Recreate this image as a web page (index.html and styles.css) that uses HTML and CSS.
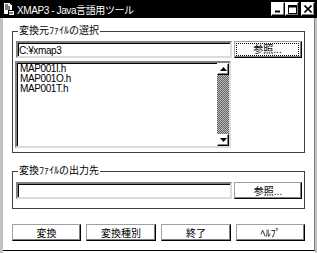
FILE: index.html
```html
<!DOCTYPE html>
<html lang="ja">
<head>
  <meta charset="UTF-8" />
  <meta name="viewport" content="width=device-width, initial-scale=1.0">
  <title>XMAP3 - Java言語用ツール</title>
  <link rel="stylesheet" href="styles.css">
</head>
<body>
  <div class="window">
    <div class="titlebar">
      <svg class="app-icon" width="13" height="14" viewBox="0 0 13 14">
        <path d="M1.5 0.5h6l3 3v9h-9z" fill="#fff" stroke="#000"/>
        <path d="M3 3h3M3 5h5M3 7h5" stroke="#000"/>
        <rect x="6.5" y="8.5" width="6" height="5" fill="#fff" stroke="#000"/>
        <path d="M8 10v2M10 10v2" stroke="#000"/>
      </svg>
      <span class="title">XMAP3 - Java言語用ツール</span>
      <div class="caption-buttons">
        <div class="cap-btn">
          <svg width="8" height="8" viewBox="0 0 8 8"><path d="M1 6.5h5" stroke="#000" stroke-width="2"/></svg>
        </div>
        <div class="cap-btn">
          <svg width="9" height="9" viewBox="0 0 9 9"><rect x="0.5" y="0.5" width="8" height="8" fill="none" stroke="#000"/><path d="M0 1.5h9" stroke="#000" stroke-width="2"/></svg>
        </div>
        <div class="cap-btn cap-close">
          <svg width="8" height="8" viewBox="0 0 8 8"><path d="M0.5 0.5l7 7M7.5 0.5l-7 7" stroke="#000" stroke-width="1.6"/></svg>
        </div>
      </div>
    </div>

    <div class="client">
      <fieldset class="group group-src">
        <legend>変換元ﾌｧｲﾙの選択</legend>
        <div class="row">
          <div class="field">C:¥xmap3</div>
          <button class="btn btn-browse"><span class="focus-rect">参照...</span></button>
        </div>
        <div class="listbox">
          <ul class="items">
            <li>MAP001I.h</li>
            <li>MAP001O.h</li>
            <li>MAP001T.h</li>
          </ul>
          <div class="vscroll">
            <div class="sb-btn">
              <svg width="7" height="4" viewBox="0 0 7 4"><path d="M3.5 0L7 4H0z" fill="#000"/></svg>
            </div>
            <div class="sb-track"></div>
            <div class="sb-btn">
              <svg width="7" height="4" viewBox="0 0 7 4"><path d="M0 0h7L3.5 4z" fill="#000"/></svg>
            </div>
          </div>
        </div>
      </fieldset>

      <fieldset class="group group-dst">
        <legend>変換ﾌｧｲﾙの出力先</legend>
        <div class="row">
          <div class="field"></div>
          <button class="btn btn-browse">参照...</button>
        </div>
      </fieldset>

      <div class="actions">
        <button class="btn action">変換</button>
        <button class="btn action wide">変換種別</button>
        <button class="btn action wide">終了</button>
        <button class="btn action">ﾍﾙﾌﾟ</button>
      </div>
    </div>
  </div>
</body>
</html>
```

FILE: styles.css
```css
body {
  margin: 0;
  background: #fff;
  font-family: "Liberation Sans", "Noto Sans CJK JP", sans-serif;
  font-size: 10px;
  color: #000;
}

.window {
  width: 317px;
  height: 253px;
  box-sizing: border-box;
  border-left: 3px solid #c0c0c0;
  border-right: 2px solid #c0c0c0;
  display: flex;
  flex-direction: column;
}

.titlebar {
  height: 18px;
  margin-left: -3px;
  margin-right: -2px;
  background: #000;
  display: flex;
  align-items: center;
  padding-left: 2px;
}

.app-icon {
  flex: none;
}

.title {
  color: #fff;
  font-size: 10px;
  letter-spacing: -0.4px;
  margin-left: 2px;
  flex: 1;
  white-space: nowrap;
}

.caption-buttons {
  display: flex;
  margin-right: 2px;
}

.cap-btn {
  width: 12px;
  height: 12px;
  background: #fff;
  border: 1px solid #fff;
  border-right-color: #000;
  border-bottom-color: #000;
  box-shadow: inset -1px -1px #808080;
  display: flex;
  align-items: center;
  justify-content: center;
}

.cap-close {
  margin-left: 2px;
}

.client {
  flex: 1;
  border-right: 1px solid #808080;
  border-bottom: 1px solid #000;
  margin-bottom: 2px;
}

.group {
  margin: 0 10px 0 9px;
  border: 1px solid #404040;
  padding: 4px 2px 4px 3px;
}

.group legend {
  padding: 0 1px;
  margin-left: 2px;
  line-height: 12px;
}

.group-src {
  margin-top: 7px;
}

.group-dst {
  margin-top: 12px;
  padding-top: 5px;
  padding-bottom: 9px;
}

.row {
  display: flex;
  align-items: flex-start;
}

.field {
  width: 216px;
  height: 17px;
  box-sizing: border-box;
  border: 2px solid;
  border-color: #808080 #dcdcdc #dcdcdc #808080;
  box-shadow: inset 1px 1px #000;
  padding: 1px 1px;
  line-height: 13px;
  letter-spacing: -0.4px;
}

.btn {
  font-family: inherit;
  font-size: 10px;
  background: #fff;
  color: #000;
  padding: 0;
  box-sizing: border-box;
  border: 1px solid;
  border-color: #a0a0a0 #000 #000 #a0a0a0;
  box-shadow: inset -1px -1px #808080;
}

.btn-browse {
  width: 68px;
  height: 17px;
  margin-left: 2px;
}

.focus-rect {
  display: block;
  margin: 1px 2px 2px 1px;
  border: 1px dotted #000;
  line-height: 11px;
}

.listbox {
  display: flex;
  width: 216px;
  height: 87px;
  margin-top: 3px;
  margin-left: -1px;
  box-sizing: border-box;
  border: 2px solid;
  border-color: #808080 #dcdcdc #dcdcdc #808080;
  box-shadow: inset 1px 1px #000;
}

.items {
  flex: 1;
  list-style: none;
  margin: 0;
  padding: 1px 0 0 3px;
  line-height: 10px;
  letter-spacing: -0.4px;
}

.vscroll {
  width: 12px;
  display: flex;
  flex-direction: column;
}

.sb-btn {
  height: 12px;
  box-sizing: border-box;
  background: #fff;
  border: 1px solid;
  border-color: #fff #000 #000 #fff;
  box-shadow: inset -1px -1px #808080;
  display: flex;
  align-items: center;
  justify-content: center;
}

.sb-track {
  flex: 1;
  background: repeating-conic-gradient(#606060 0 25%, #c0c0c0 0 50%) 0 0 / 2px 2px;
}

.actions {
  display: flex;
  gap: 5px;
  margin: 15px 0 0 9px;
}

.action {
  width: 69px;
  height: 17px;
}

.action.wide {
  width: 70px;
}
```
